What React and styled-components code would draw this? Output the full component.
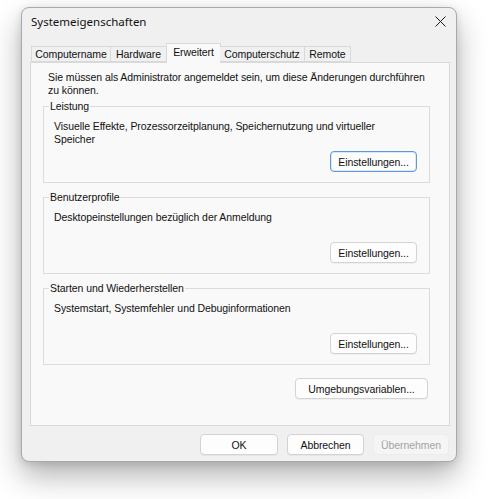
import { createGlobalStyle, styled } from 'styled-components';

const GlobalStyle = createGlobalStyle`
  html, body {
    margin: 0;
    min-height: 100%;
    background: #ffffff;
  }
  html {
    height: 100%;
  }
  body {
    font-family: 'Liberation Sans', Arial, sans-serif;
    font-size: 10.5px;
    letter-spacing: -0.08px;
    color: #111;
  }
`;

const tabs = [
  { label: 'Computername', width: 80 },
  { label: 'Hardware', width: 56 },
  { label: 'Erweitert', width: 55, active: true },
  { label: 'Computerschutz', width: 85 },
  { label: 'Remote', width: 46 },
];

const groups = [
  {
    title: 'Leistung',
    text: 'Visuelle Effekte, Prozessorzeitplanung, Speichernutzung und virtueller Speicher',
    focused: true,
  },
  {
    title: 'Benutzerprofile',
    text: 'Desktopeinstellungen bezüglich der Anmeldung',
  },
  {
    title: 'Starten und Wiederherstellen',
    text: 'Systemstart, Systemfehler und Debuginformationen',
  },
];

const CloseIcon = () => (
  <svg width='11' height='11' viewBox='0 0 11 11'>
    <path d='M0.5 0.5 L10.5 10.5 M10.5 0.5 L0.5 10.5' stroke='#1a1a1a' strokeWidth='1' fill='none' />
  </svg>
);

const App = () => {
  return (
    <>
      <GlobalStyle />
      <Window>
        <TitleBar>
          <Title>Systemeigenschaften</Title>
          <CloseButton aria-label='Schließen'>
            <CloseIcon />
          </CloseButton>
        </TitleBar>
        <Body>
          <TabStrip>
            {tabs.map((t) => (
              <Tab key={t.label} $active={t.active} $width={t.width}>
                {t.label}
              </Tab>
            ))}
          </TabStrip>
          <Panel>
            <Intro>
              Sie müssen als Administrator angemeldet sein, um diese Änderungen durchführen
              zu können.
            </Intro>
            {groups.map((g) => (
              <Group key={g.title}>
                <Legend>{g.title}</Legend>
                <GroupInner>
                  <Description>{g.text}</Description>
                  <ButtonRow>
                    <Button $width={87} $focused={g.focused}>
                      Einstellungen...
                    </Button>
                  </ButtonRow>
                </GroupInner>
              </Group>
            ))}
            <EnvRow>
              <Button $width={133}>Umgebungsvariablen...</Button>
            </EnvRow>
          </Panel>
          <Footer>
            <Button $width={78}>OK</Button>
            <Button $width={77}>Abbrechen</Button>
            <Button $width={76} disabled>
              Übernehmen
            </Button>
          </Footer>
        </Body>
      </Window>
    </>
  );
};

export default App;

const Window = styled.div`
  box-sizing: border-box;
  width: 436px;
  height: 455px;
  margin: 7px 0 0 21px;
  background: #f0f0f0;
  border: 1px solid #a9a9a9;
  border-radius: 8px;
  box-shadow: 0 14px 30px rgba(0, 0, 0, 0.3), 0 2px 8px rgba(0, 0, 0, 0.12);
  display: flex;
  flex-direction: column;
`;

const TitleBar = styled.div`
  height: 35px;
  display: flex;
  align-items: flex-start;
  justify-content: space-between;
  padding: 6px 9px 0 9px;
  box-sizing: border-box;
`;

const Title = styled.div`
  font-family: 'Noto Sans', 'Open Sans', sans-serif;
  font-size: 11.5px;
  letter-spacing: 0;
  line-height: 16px;
  color: #111;
`;

const CloseButton = styled.button`
  border: 0;
  background: none;
  padding: 0;
  margin: 2px 1px 0 0;
  width: 11px;
  height: 11px;
  display: flex;
`;

const Body = styled.div`
  padding: 0 7px 0 8px;
  display: flex;
  flex-direction: column;
`;

const TabStrip = styled.div`
  display: flex;
  align-items: flex-end;
  height: 19px;
  padding-left: 1px;
  position: relative;
  z-index: 1;
`;

const Tab = styled.div`
  box-sizing: border-box;
  width: ${(p) => p.$width}px;
  height: ${(p) => (p.$active ? 20 : 16)}px;
  margin-bottom: ${(p) => (p.$active ? -1 : 0)}px;
  margin-left: ${(p) => (p.$active ? -1 : 0)}px;
  margin-right: ${(p) => (p.$active ? -1 : 0)}px;
  background: ${(p) => (p.$active ? '#f9f9f9' : '#f0f0f0')};
  border: 1px solid #d9d9d9;
  border-bottom: ${(p) => (p.$active ? 'none' : '1px solid #d9d9d9')};
  border-left: ${(p) => (p.$active ? '1px solid #d9d9d9' : 'none')};
  display: flex;
  align-items: ${(p) => (p.$active ? 'flex-start' : 'center')};
  justify-content: center;
  padding-top: ${(p) => (p.$active ? 2 : 0)}px;
  line-height: 13px;
  white-space: nowrap;
  &:first-child {
    border-left: 1px solid #d9d9d9;
  }
`;

const Panel = styled.div`
  box-sizing: border-box;
  width: 420px;
  height: 364px;
  background: #f9f9f9;
  border: 1px solid #d9d9d9;
  padding: 8px 0 0 12px;
  display: flex;
  flex-direction: column;
`;

const Intro = styled.p`
  margin: 0 0 3px 5px;
  width: 388px;
  line-height: 13px;
`;

const Group = styled.fieldset`
  box-sizing: border-box;
  width: 387px;
  margin: 0 0 8px 0;
  padding: 7px 12px 10px 10px;
  border: 1px solid #dcdcdc;
  min-width: 0;
`;

const Legend = styled.legend`
  padding: 0 1px;
  margin-left: -5px;
  line-height: 13px;
`;

const GroupInner = styled.div`
  height: 52px;
  display: flex;
  flex-direction: column;
`;

const Description = styled.div`
  line-height: 13px;
`;

const ButtonRow = styled.div`
  margin-top: auto;
  display: flex;
  justify-content: flex-end;
`;

const EnvRow = styled.div`
  width: 385px;
  display: flex;
  justify-content: flex-end;
  margin-top: 5px;
`;

const Button = styled.button`
  box-sizing: border-box;
  width: ${(p) => p.$width}px;
  height: 21px;
  padding: 0;
  font-family: inherit;
  font-size: 10.5px;
  letter-spacing: inherit;
  color: #111;
  background: #fdfdfd;
  border: 1px solid ${(p) => (p.$focused ? '#5c9ad8' : '#d3d3d3')};
  box-shadow: ${(p) => (p.$focused ? 'inset 0 0 0 1px #dbe9f7' : '0 1px 0 rgba(0,0,0,0.04)')};
  border-radius: 4px;

  &:disabled {
    color: #a3a3a3;
    background: #f5f5f5;
    border-color: #ececec;
    box-shadow: none;
  }
`;

const Footer = styled.div`
  display: flex;
  justify-content: flex-end;
  gap: 9px;
  padding-top: 8px;
`;
